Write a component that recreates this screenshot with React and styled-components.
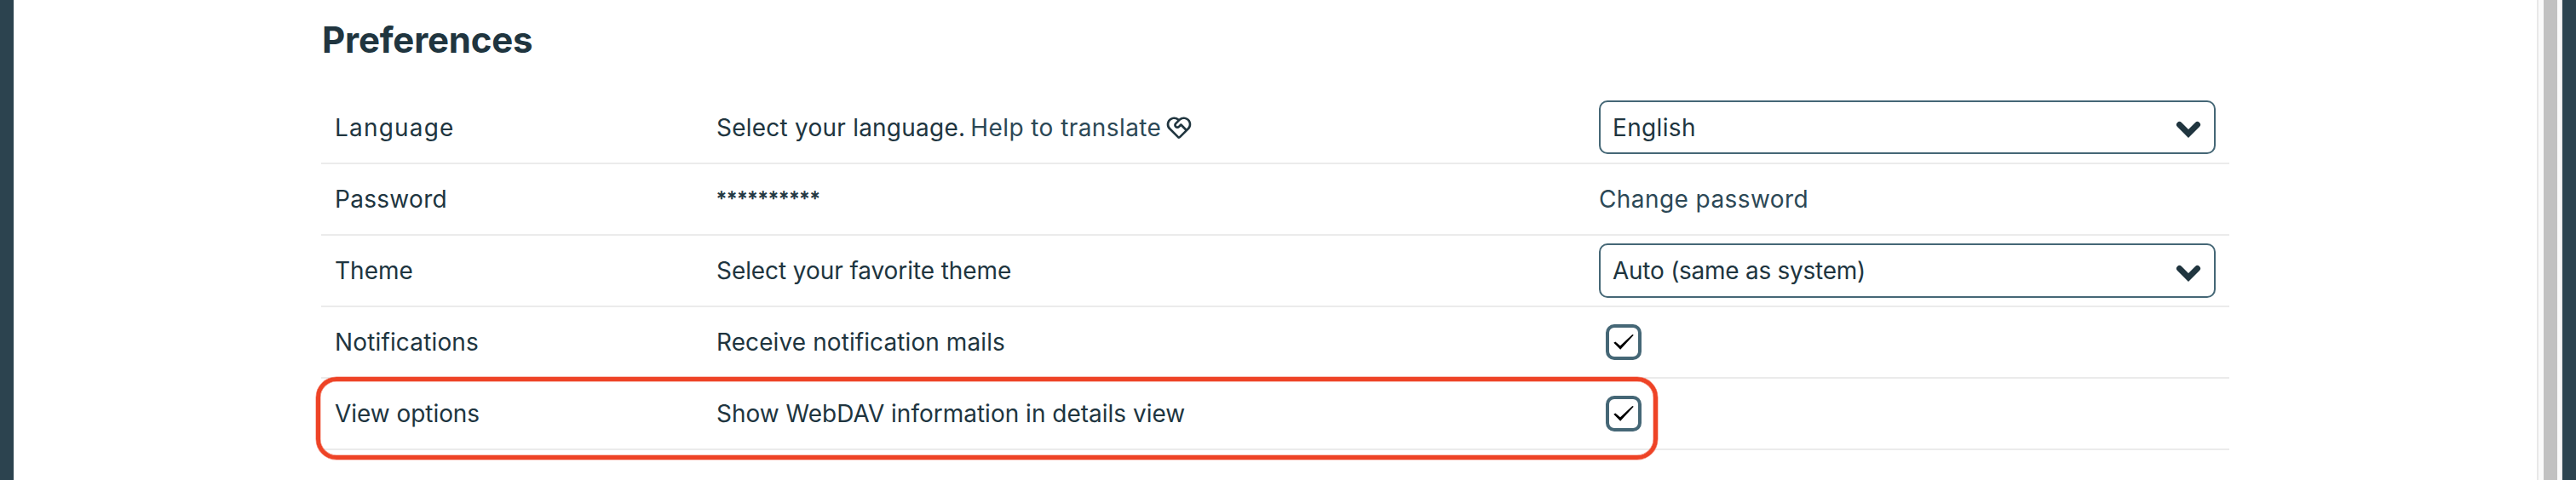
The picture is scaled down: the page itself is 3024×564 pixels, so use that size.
import React from 'react';
import styled, { createGlobalStyle } from 'styled-components';
import { RiServiceLine } from 'react-icons/ri';

const GlobalStyle = createGlobalStyle`
  * { box-sizing: border-box; }
  body {
    margin: 0;
    background: #fff;
    color: #20353f;
    font-family: Inter, "Liberation Sans", sans-serif;
    font-size: 28px;
    line-height: 34px;
  }
`;

const Frame = styled.div`
  display: flex;
  height: 564px;
  overflow: hidden;
  border-left: 16px solid #2c434f;
  border-right: 16px solid #2c434f;
`;

const Page = styled.main`
  flex: 1;
  padding: 20px 361px 0;
`;

const ScrollTrack = styled.div`
  width: 30px;
  padding: 0 4px 0 6px;
  background: #fafafa;
  border-left: 2px solid #e8e8e8;
  border-right: 2px solid #ececec;
`;

const ScrollThumb = styled.div`
  height: 100%;
  background: #c1c1c1;
`;

const Title = styled.h1`
  margin: 0 0 34px;
  padding-left: 1px;
  height: 54px;
  font-size: 42px;
  line-height: 54px;
  font-weight: 700;
  letter-spacing: -0.2px;
`;

const Row = styled.div`
  position: relative;
  display: grid;
  grid-template-columns: 448px 1036px 724px;
  align-items: center;
  width: 2240px;
  height: ${({ $height = 84 }) => $height}px;
  padding: 0 16px;
  border-bottom: 2px solid #ebebeb;
  white-space: nowrap;
`;

const Cell = styled.div`
  display: flex;
  align-items: center;
`;

const Label = styled.span`
  letter-spacing: ${({ $tracking = 0 }) => $tracking}px;
`;

const Mask = styled.span`
  padding-top: 3px;
  font-family: Lato, sans-serif;
  letter-spacing: 0.3px;
  -webkit-text-stroke: 0.7px #20353f;
`;

const Link = styled.a`
  color: #2c4856;
  letter-spacing: 0.42px;
`;

const HelpLink = styled(Link)`
  display: flex;
  align-items: center;
  gap: 5px;
  margin-left: 6px;

  svg { color: #20353f; }
`;

const Select = styled.div`
  display: flex;
  align-items: center;
  justify-content: space-between;
  width: 724px;
  height: ${({ $height = 64 }) => $height}px;
  padding: 0 15px 0 14px;
  border: 2px solid #456776;
  border-radius: 10px;
`;

const Checkbox = styled.span`
  display: flex;
  width: 42px;
  height: 42px;
  margin-left: 8px;
  border: 4px solid #456776;
  border-radius: 10px;
`;

const Highlight = styled.div`
  position: absolute;
  top: -2px;
  left: -6px;
  width: 1575px;
  height: 97px;
  border: 5px solid #ee4326;
  border-radius: 24px;
  box-shadow: 0 0 0 0.5px #ee432699, inset 0 0 0 0.5px #ee432699;
`;

const ChevronIcon = styled.svg`
  margin-top: 5px;
`;

const Chevron = () => (
  <ChevronIcon width="30" height="22" viewBox="0 0 30 22">
    <path d="M4.5 5.5 15 16 25.5 5.5" fill="none" stroke="#20353f" strokeWidth="7" strokeLinecap="round" />
  </ChevronIcon>
);

const Tick = () => (
  <svg width="34" height="34" viewBox="4 4 34 34">
    <path d="M9.3 21.8 11.3 20.5 17 25.3 31.3 12 32.8 12.8 17.2 29.7Z" fill="#000" />
  </svg>
);

export default function App() {
  return (
    <>
      <GlobalStyle />
      <Frame>
        <Page>
          <Title>Preferences</Title>
          <Row $height={85}>
            <Label $tracking={1.18}>Language</Label>
            <Cell>
              <Label $tracking={0.23}>Select your language.</Label>
              <HelpLink>
                Help to translate
                <RiServiceLine size={32} />
              </HelpLink>
            </Cell>
            <Select $height={63}>
              <Label $tracking={0.35}>English</Label>
              <Chevron />
            </Select>
          </Row>
          <Row>
            <Label $tracking={0.3}>Password</Label>
            <Mask>**********</Mask>
            <Link>Change password</Link>
          </Row>
          <Row>
            <Label>Theme</Label>
            <Label $tracking={-0.08}>Select your favorite theme</Label>
            <Select>
              <Label $tracking={-0.26}>Auto (same as system)</Label>
              <Chevron />
            </Select>
          </Row>
          <Row>
            <Label $tracking={0.15}>Notifications</Label>
            <Label $tracking={0.09}>Receive notification mails</Label>
            <Checkbox><Tick /></Checkbox>
          </Row>
          <Row>
            <Label $tracking={-0.05}>View options</Label>
            <Label>Show WebDAV information in details view</Label>
            <Checkbox><Tick /></Checkbox>
            <Highlight />
          </Row>
        </Page>
        <ScrollTrack><ScrollThumb /></ScrollTrack>
      </Frame>
    </>
  );
}
